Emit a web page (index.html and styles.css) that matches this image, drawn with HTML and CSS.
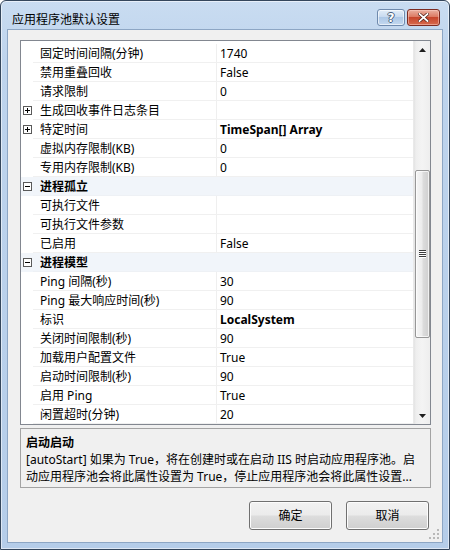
FILE: index.html
```html
<!DOCTYPE html>
<html lang="zh-CN">
<head>
<meta charset="utf-8">
<title>应用程序池默认设置</title>
<link rel="stylesheet" href="styles.css">
</head>
<body>
<div class="window">
  <div class="titlebar">
    <span class="title">应用程序池默认设置</span>
    <div class="caption">
      <div class="cbtn help"><span>?</span></div>
      <div class="cbtn close">
        <svg width="11" height="9" viewBox="0 0 11 9"><path d="M1.5 1 L9.5 8 M9.5 1 L1.5 8" stroke="#4a1c14" stroke-width="3.2" stroke-linecap="square"/><path d="M1.5 1 L9.5 8 M9.5 1 L1.5 8" stroke="#fff" stroke-width="1.8" stroke-linecap="square"/></svg>
      </div>
    </div>
  </div>
  <div class="client">
    <div class="grid">
      <div class="rows">
        <div class="row"><div class="gut"></div><div class="name">固定时间间隔(分钟)</div><div class="val">1740</div></div>
        <div class="row"><div class="gut"></div><div class="name">禁用重叠回收</div><div class="val">False</div></div>
        <div class="row"><div class="gut"></div><div class="name">请求限制</div><div class="val">0</div></div>
        <div class="row"><div class="gut"><svg class="pm" width="9" height="9" viewBox="0 0 9 9"><rect x=".5" y=".5" width="8" height="8" fill="#fff" stroke="#5a5a5a"/><path d="M2 4.5h5M4.5 2v5" stroke="#000"/></svg></div><div class="name">生成回收事件日志条目</div><div class="val"></div></div>
        <div class="row"><div class="gut"><svg class="pm" width="9" height="9" viewBox="0 0 9 9"><rect x=".5" y=".5" width="8" height="8" fill="#fff" stroke="#5a5a5a"/><path d="M2 4.5h5M4.5 2v5" stroke="#000"/></svg></div><div class="name">特定时间</div><div class="val strong">TimeSpan[] Array</div></div>
        <div class="row"><div class="gut"></div><div class="name">虚拟内存限制(KB)</div><div class="val">0</div></div>
        <div class="row"><div class="gut"></div><div class="name">专用内存限制(KB)</div><div class="val">0</div></div>
        <div class="row cat"><div class="gut"><svg class="pm" width="9" height="9" viewBox="0 0 9 9"><rect x=".5" y=".5" width="8" height="8" fill="#fff" stroke="#5a5a5a"/><path d="M2 4.5h5" stroke="#000"/></svg></div><div class="catname">进程孤立</div></div>
        <div class="row"><div class="gut"></div><div class="name">可执行文件</div><div class="val"></div></div>
        <div class="row"><div class="gut"></div><div class="name">可执行文件参数</div><div class="val"></div></div>
        <div class="row"><div class="gut"></div><div class="name">已启用</div><div class="val">False</div></div>
        <div class="row cat"><div class="gut"><svg class="pm" width="9" height="9" viewBox="0 0 9 9"><rect x=".5" y=".5" width="8" height="8" fill="#fff" stroke="#5a5a5a"/><path d="M2 4.5h5" stroke="#000"/></svg></div><div class="catname">进程模型</div></div>
        <div class="row"><div class="gut"></div><div class="name">Ping 间隔(秒)</div><div class="val">30</div></div>
        <div class="row"><div class="gut"></div><div class="name">Ping 最大响应时间(秒)</div><div class="val">90</div></div>
        <div class="row"><div class="gut"></div><div class="name">标识</div><div class="val strong">LocalSystem</div></div>
        <div class="row"><div class="gut"></div><div class="name">关闭时间限制(秒)</div><div class="val">90</div></div>
        <div class="row"><div class="gut"></div><div class="name">加载用户配置文件</div><div class="val">True</div></div>
        <div class="row"><div class="gut"></div><div class="name">启动时间限制(秒)</div><div class="val">90</div></div>
        <div class="row"><div class="gut"></div><div class="name">启用 Ping</div><div class="val">True</div></div>
        <div class="row"><div class="gut"></div><div class="name">闲置超时(分钟)</div><div class="val">20</div></div>
      </div>
      <div class="sb">
        <div class="sb-btn"><svg width="7" height="4" viewBox="0 0 7 4"><path d="M3.5 0 L7 4 L0 4 Z" fill="#1e1e1e"/></svg></div>
        <div class="sb-track">
          <div class="thumb">
            <svg width="7" height="8" viewBox="0 0 7 8"><path d="M0 0.5h7M0 2.5h7M0 4.5h7M0 6.5h7" stroke="#3c3c3c"/><path d="M0 1.5h7M0 3.5h7M0 5.5h7M0 7.5h7" stroke="#fff"/></svg>
          </div>
        </div>
        <div class="sb-btn"><svg width="7" height="4" viewBox="0 0 7 4"><path d="M0 0 L7 0 L3.5 4 Z" fill="#1e1e1e"/></svg></div>
      </div>
    </div>
    <div class="desc">
      <div class="desc-title">启动启动</div>
      <div class="desc-line">[autoStart] 如果为 True，将在创建时或在启动 IIS 时启动应用程序池。启</div>
      <div class="desc-line">动应用程序池会将此属性设置为 True，停止应用程序池会将此属性设置...</div>
    </div>
    <div class="buttons">
      <div class="btn">确定</div>
      <div class="btn">取消</div>
    </div>
    <svg class="grip" width="11" height="11" viewBox="0 0 11 11">
      <g fill="#b8b8b8"><rect x="8" y="0" width="2" height="2"/><rect x="4" y="4" width="2" height="2"/><rect x="8" y="4" width="2" height="2"/><rect x="0" y="8" width="2" height="2"/><rect x="4" y="8" width="2" height="2"/><rect x="8" y="8" width="2" height="2"/></g>
    </svg>
  </div>
</div>
</body>
</html>
```

FILE: styles.css
```css
* { box-sizing: border-box; }
html, body { margin: 0; padding: 0; }
body {
  width: 450px;
  height: 550px;
  overflow: hidden;
  background: #fff;
  font-family: "Noto Sans", "Noto Sans CJK SC", sans-serif;
  font-size: 12px;
  color: #000;
}

.window {
  width: 450px;
  height: 550px;
  border: 1px solid #34465c;
  border-radius: 6px 6px 0 0;
  background: linear-gradient(to bottom, #c9dcf1 0, #bed4ed 60px, #b5cde9 100%);
  box-shadow: inset 0 0 0 1px rgba(255, 255, 255, 0.55);
  padding: 0 6px 6px;
  display: flex;
  flex-direction: column;
}

.titlebar {
  height: 28px;
  display: flex;
  align-items: flex-start;
  padding: 0 3px 0 5px;
}
.title {
  margin-top: 10px;
  line-height: 17px;
  font-size: 12px;
  color: #000;
}
.caption {
  margin-left: auto;
  margin-top: 8px;
  display: flex;
  gap: 2px;
}
.cbtn {
  height: 17px;
  border-radius: 3px;
  display: flex;
  align-items: center;
  justify-content: center;
}
.help {
  width: 28px;
  border: 1px solid #6f8aad;
  background: linear-gradient(to bottom, #e3edf8 0%, #c8daef 45%, #aec8e6 50%, #c3d8ef 100%);
  box-shadow: inset 0 0 0 1px rgba(255, 255, 255, 0.6);
}
.help span {
  font-family: "DejaVu Sans", sans-serif;
  font-weight: bold;
  font-size: 12px;
  line-height: 14px;
  color: #fff;
  text-shadow: 1px 0 0 #4a5f7c, -1px 0 0 #4a5f7c, 0 1px 0 #4a5f7c, 0 -1px 0 #4a5f7c;
}
.close {
  width: 33px;
  border: 1px solid #7c2b21;
  background: linear-gradient(to bottom, #eab0a0 0%, #dc7a63 45%, #c7462c 50%, #d76a4d 100%);
  box-shadow: inset 0 0 0 1px rgba(255, 210, 200, 0.5);
}

.client {
  flex: 1;
  position: relative;
  background: #f0f0f0;
  border: 1px solid #8da6c4;
  display: flex;
  flex-direction: column;
  padding: 10px 11px 0 12px;
}

.grid {
  height: 385px;
  border: 1px solid #828790;
  background: #fff;
  display: flex;
}
.rows {
  flex: 1;
  padding-top: 3px;
  overflow: hidden;
}
.row {
  display: flex;
  height: 19px;
}
.gut {
  width: 12px;
  flex: none;
  display: flex;
  align-items: center;
  padding-left: 2px;
  padding-bottom: 1px;
}
.name {
  width: 184px;
  flex: none;
  padding: 2px 0 0 7px;
  line-height: 16px;
  border-right: 1px solid #efefef;
  border-bottom: 1px solid #f0f0f0;
  white-space: nowrap;
  overflow: hidden;
}
.val {
  flex: 1;
  padding: 2px 0 0 3px;
  line-height: 16px;
  border-bottom: 1px solid #f0f0f0;
  white-space: nowrap;
  overflow: hidden;
}
.strong { font-weight: bold; }
.row.cat { background: #f1f5fa; }
.catname {
  flex: 1;
  padding: 2px 0 0 7px;
  line-height: 16px;
  font-weight: bold;
  border-bottom: 1px solid #eef1f5;
}
.pm { display: block; }

.sb {
  width: 17px;
  flex: none;
  display: flex;
  flex-direction: column;
  background: linear-gradient(to right, #e3e3e3 0, #eeeeee 2px, #f4f4f4 50%, #eeeeee 100%);
  border-left: 1px solid #e9e9e9;
}
.sb-btn {
  height: 17px;
  display: flex;
  align-items: center;
  justify-content: center;
}
.sb-track {
  flex: 1;
  padding: 112px 0 0 1px;
}
.thumb {
  width: 15px;
  height: 168px;
  border: 1px solid #979797;
  border-radius: 2px;
  background: linear-gradient(to right, #f6f6f6 0%, #ececec 45%, #dcdcdc 55%, #cfcfcf 100%);
  box-shadow: inset 0 0 0 1px rgba(255, 255, 255, 0.7);
  display: flex;
  align-items: center;
  justify-content: center;
}

.desc {
  margin-top: 3px;
  height: 60px;
  border: 1px solid #a3a3a3;
  padding: 5px 5px 0;
  line-height: 17px;
}
.desc-title { font-weight: bold; }
.desc-line {
  white-space: nowrap;
  overflow: hidden;
}

.buttons {
  margin-top: 13px;
  margin-right: 2px;
  display: flex;
  justify-content: flex-end;
  gap: 14px;
}
.btn {
  width: 83px;
  height: 29px;
  border: 1px solid #707070;
  border-radius: 3px;
  background: linear-gradient(to bottom, #f2f2f2 0%, #ebebeb 48%, #dddddd 52%, #cfcfcf 100%);
  box-shadow: inset 0 0 0 1px #fcfcfc;
  display: flex;
  align-items: center;
  justify-content: center;
  line-height: 17px;
}

.grip {
  position: absolute;
  right: 2px;
  bottom: 2px;
}
```
